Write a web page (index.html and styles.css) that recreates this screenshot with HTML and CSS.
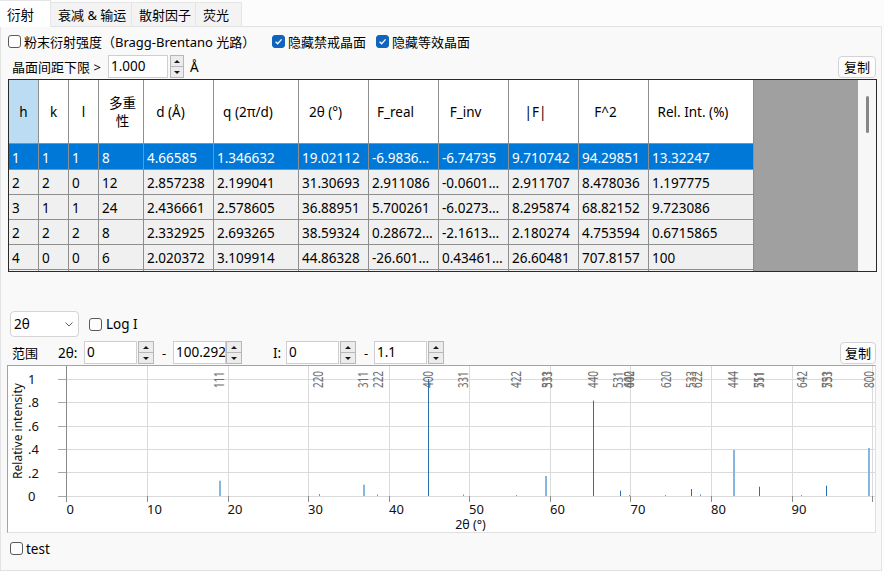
FILE: index.html
```html
<!DOCTYPE html>
<html lang="zh">
<head>
<meta charset="utf-8">
<title>衍射</title>
<link rel="stylesheet" href="styles.css">
</head>
<body>
<div class="tabs">
  <div class="tab tab-1 tab-active">衍射</div>
  <div class="tab tab-2">衰减 &amp; 输运</div>
  <div class="tab tab-3">散射因子</div>
  <div class="tab tab-4">荧光</div>
</div>
<div class="panel">
  <div class="opts">
    <div class="opt opt-1"><span class="cb"></span>粉末衍射强度（Bragg-Brentano 光路）</div>
    <div class="opt opt-2"><span class="cb cb-on"><svg width="11" height="11" viewBox="0 0 11 11"><path d="M2.6 5.8 L4.6 7.8 L8.6 3.4" fill="none" stroke="#fff" stroke-width="1.3"/></svg></span>隐藏禁戒晶面</div>
    <div class="opt opt-3"><span class="cb cb-on"><svg width="11" height="11" viewBox="0 0 11 11"><path d="M2.6 5.8 L4.6 7.8 L8.6 3.4" fill="none" stroke="#fff" stroke-width="1.3"/></svg></span>隐藏等效晶面</div>
  </div>

  <div class="dmin">
    <span class="dmin-label">晶面间距下限 &gt;</span>
    <span class="num num-dmin">1.000</span>
    <span class="spin spin-dmin"><span class="spin-b"><i class="tri-up"></i></span><span class="spin-b"><i class="tri-down"></i></span></span>
    <span class="unit">Å</span>
    <span class="btn">复制</span>
  </div>

  <div class="grid">
    <div class="table">
      <div class="th th-sel th-narrow">h</div>
      <div class="th th-narrow">k</div>
      <div class="th th-narrow">l</div>
      <div class="th th-narrow th-multi">多重<br>性</div>
      <div class="th">d (Å)</div>
      <div class="th">q (2π/d)</div>
      <div class="th">2θ (°)</div>
      <div class="th">F_real</div>
      <div class="th">F_inv</div>
      <div class="th">|F|</div>
      <div class="th">F^2</div>
      <div class="th">Rel. Int. (%)</div>

      <div class="td sel">1</div><div class="td sel">1</div><div class="td sel">1</div><div class="td sel">8</div><div class="td sel">4.66585</div><div class="td sel">1.346632</div><div class="td sel">19.02112</div><div class="td sel">-6.9836…</div><div class="td sel">-6.74735</div><div class="td sel">9.710742</div><div class="td sel">94.29851</div><div class="td sel">13.32247</div>

      <div class="td">2</div><div class="td">2</div><div class="td">0</div><div class="td">12</div><div class="td">2.857238</div><div class="td">2.199041</div><div class="td">31.30693</div><div class="td">2.911086</div><div class="td">-0.0601…</div><div class="td">2.911707</div><div class="td">8.478036</div><div class="td">1.197775</div>

      <div class="td">3</div><div class="td">1</div><div class="td">1</div><div class="td">24</div><div class="td">2.436661</div><div class="td">2.578605</div><div class="td">36.88951</div><div class="td">5.700261</div><div class="td">-6.0273…</div><div class="td">8.295874</div><div class="td">68.82152</div><div class="td">9.723086</div>

      <div class="td">2</div><div class="td">2</div><div class="td">2</div><div class="td">8</div><div class="td">2.332925</div><div class="td">2.693265</div><div class="td">38.59324</div><div class="td">0.28672…</div><div class="td">-2.1613…</div><div class="td">2.180274</div><div class="td">4.753594</div><div class="td">0.6715865</div>

      <div class="td">4</div><div class="td">0</div><div class="td">0</div><div class="td">6</div><div class="td">2.020372</div><div class="td">3.109914</div><div class="td">44.86328</div><div class="td">-26.601…</div><div class="td">0.43461…</div><div class="td">26.60481</div><div class="td">707.8157</div><div class="td">100</div>

      <div class="td"></div><div class="td"></div><div class="td"></div><div class="td"></div><div class="td"></div><div class="td"></div><div class="td"></div><div class="td"></div><div class="td"></div><div class="td"></div><div class="td"></div><div class="td"></div>
    </div>
    <div class="workspace"></div>
    <div class="vscroll"><div class="thumb"></div></div>
  </div>

  <div class="ctrl">
    <div class="combo"><span>2θ</span><svg class="chev" width="8" height="5" viewBox="0 0 8 5"><path d="M0.5 0.5 L4 4 L7.5 0.5" fill="none" stroke="#606060" stroke-width="1"/></svg></div>
    <div class="opt opt-log"><span class="cb"></span>Log I</div>
  </div>

  <div class="range">
    <span class="r-label">范围</span>
    <span class="r-2t">2θ:</span>
    <span class="num num-r">0</span>
    <span class="spin spin-r"><span class="spin-b"><i class="tri-up"></i></span><span class="spin-b"><i class="tri-down"></i></span></span>
    <span class="r-dash">-</span>
    <span class="num num-r">100.292</span>
    <span class="spin spin-r spin-flush"><span class="spin-b"><i class="tri-up"></i></span><span class="spin-b"><i class="tri-down"></i></span></span>
    <span class="r-i">I:</span>
    <span class="num num-r">0</span>
    <span class="spin spin-r"><span class="spin-b"><i class="tri-up"></i></span><span class="spin-b"><i class="tri-down"></i></span></span>
    <span class="r-dash r-dash2">-</span>
    <span class="num num-r">1.1</span>
    <span class="spin spin-r"><span class="spin-b"><i class="tri-up"></i></span><span class="spin-b"><i class="tri-down"></i></span></span>
    <span class="btn btn-r">复制</span>
  </div>

  <div class="chart">
    <svg class="plot" width="867" height="166" viewBox="8 367 867 166">
      <g stroke="#dadada" stroke-width="1">
        <line x1="147.5" y1="367" x2="147.5" y2="497"/>
        <line x1="228.5" y1="367" x2="228.5" y2="497"/>
        <line x1="308.5" y1="367" x2="308.5" y2="497"/>
        <line x1="389.5" y1="367" x2="389.5" y2="497"/>
        <line x1="469.5" y1="367" x2="469.5" y2="497"/>
        <line x1="550.5" y1="367" x2="550.5" y2="497"/>
        <line x1="630.5" y1="367" x2="630.5" y2="497"/>
        <line x1="711.5" y1="367" x2="711.5" y2="497"/>
        <line x1="792.5" y1="367" x2="792.5" y2="497"/>
        <line x1="872.5" y1="367" x2="872.5" y2="497"/>
        <line x1="67" y1="380.5" x2="875" y2="380.5"/>
        <line x1="67" y1="403.5" x2="875" y2="403.5"/>
        <line x1="67" y1="427.5" x2="875" y2="427.5"/>
        <line x1="67" y1="450.5" x2="875" y2="450.5"/>
        <line x1="67" y1="473.5" x2="875" y2="473.5"/>
        <line x1="67" y1="497.5" x2="875" y2="497.5"/>
      </g>
      <g stroke="#a8a8a8" stroke-width="1">
        <line x1="58" y1="380.5" x2="67" y2="380.5"/>
        <line x1="58" y1="403.5" x2="67" y2="403.5"/>
        <line x1="58" y1="427.5" x2="67" y2="427.5"/>
        <line x1="58" y1="450.5" x2="67" y2="450.5"/>
        <line x1="58" y1="473.5" x2="67" y2="473.5"/>
        <line x1="58" y1="497.5" x2="67" y2="497.5"/>
      </g>
      <g stroke="#8a8a8a" stroke-width="1">
        <line x1="66.5" y1="367" x2="66.5" y2="503"/>
        <line x1="147.5" y1="497" x2="147.5" y2="503"/>
        <line x1="228.5" y1="497" x2="228.5" y2="503"/>
        <line x1="308.5" y1="497" x2="308.5" y2="503"/>
        <line x1="389.5" y1="497" x2="389.5" y2="503"/>
        <line x1="469.5" y1="497" x2="469.5" y2="503"/>
        <line x1="550.5" y1="497" x2="550.5" y2="503"/>
        <line x1="630.5" y1="497" x2="630.5" y2="503"/>
        <line x1="711.5" y1="497" x2="711.5" y2="503"/>
        <line x1="792.5" y1="497" x2="792.5" y2="503"/>
        <line x1="872.5" y1="497" x2="872.5" y2="503"/>
      </g>

      <g class="peak-labels" fill="#6e6e6e" font-size="13.5">
        <text transform="translate(223.7,389) rotate(-90)" textLength="16.5" lengthAdjust="spacingAndGlyphs">111</text>
        <text transform="translate(323,389) rotate(-90)" textLength="17" lengthAdjust="spacingAndGlyphs">220</text>
        <text transform="translate(368.3,389) rotate(-90)" textLength="16.5" lengthAdjust="spacingAndGlyphs">311</text>
        <text transform="translate(382.7,389) rotate(-90)" textLength="17" lengthAdjust="spacingAndGlyphs">222</text>
        <text transform="translate(433.3,389) rotate(-90)" textLength="17" lengthAdjust="spacingAndGlyphs">400</text>
        <text transform="translate(468.3,389) rotate(-90)" textLength="16.5" lengthAdjust="spacingAndGlyphs">331</text>
        <text transform="translate(521,389) rotate(-90)" textLength="17" lengthAdjust="spacingAndGlyphs">422</text>
        <text transform="translate(551.7,389) rotate(-90)" textLength="17" lengthAdjust="spacingAndGlyphs">333</text>
        <text transform="translate(551.7,389) rotate(-90)" textLength="17" lengthAdjust="spacingAndGlyphs">511</text>
        <text transform="translate(597.7,389) rotate(-90)" textLength="17" lengthAdjust="spacingAndGlyphs">440</text>
        <text transform="translate(623.3,389) rotate(-90)" textLength="16.5" lengthAdjust="spacingAndGlyphs">531</text>
        <text transform="translate(634.3,389) rotate(-90)" textLength="17" lengthAdjust="spacingAndGlyphs">442</text>
        <text transform="translate(634.3,389) rotate(-90)" textLength="17" lengthAdjust="spacingAndGlyphs">600</text>
        <text transform="translate(671,389) rotate(-90)" textLength="17" lengthAdjust="spacingAndGlyphs">620</text>
        <text transform="translate(695.7,389) rotate(-90)" textLength="17" lengthAdjust="spacingAndGlyphs">533</text>
        <text transform="translate(701.7,389) rotate(-90)" textLength="17" lengthAdjust="spacingAndGlyphs">622</text>
        <text transform="translate(738.3,389) rotate(-90)" textLength="17" lengthAdjust="spacingAndGlyphs">444</text>
        <text transform="translate(764.3,389) rotate(-90)" textLength="16.5" lengthAdjust="spacingAndGlyphs">551</text>
        <text transform="translate(764.3,389) rotate(-90)" textLength="16.5" lengthAdjust="spacingAndGlyphs">711</text>
        <text transform="translate(806.7,389) rotate(-90)" textLength="17" lengthAdjust="spacingAndGlyphs">642</text>
        <text transform="translate(831.7,389) rotate(-90)" textLength="17" lengthAdjust="spacingAndGlyphs">553</text>
        <text transform="translate(831.7,389) rotate(-90)" textLength="17" lengthAdjust="spacingAndGlyphs">731</text>
        <text transform="translate(873.8,389) rotate(-90)" textLength="17" lengthAdjust="spacingAndGlyphs">800</text>
      </g>

      <g stroke="#86b6de" stroke-width="2">
        <line x1="220" y1="481.7" x2="220" y2="497"/>
        <line x1="364" y1="485.7" x2="364" y2="497"/>
        <line x1="546" y1="477" x2="546" y2="497"/>
        <line x1="734" y1="451" x2="734" y2="497"/>
        <line x1="869" y1="449" x2="869" y2="497"/>
      </g>
      <g stroke="#2a70b0" stroke-width="1">
        <line x1="428.5" y1="380" x2="428.5" y2="497"/>
        <line x1="593.5" y1="401.7" x2="593.5" y2="497"/>
        <line x1="620.5" y1="491.7" x2="620.5" y2="497"/>
        <line x1="691.5" y1="490" x2="691.5" y2="497"/>
        <line x1="759.5" y1="487.7" x2="759.5" y2="497"/>
        <line x1="826.5" y1="486.7" x2="826.5" y2="497"/>
      </g>
      <g stroke="#5d9ad0" stroke-width="1">
        <line x1="319.5" y1="495" x2="319.5" y2="497"/>
        <line x1="377.5" y1="495.5" x2="377.5" y2="497"/>
        <line x1="463.5" y1="495.5" x2="463.5" y2="497"/>
        <line x1="516.5" y1="496" x2="516.5" y2="497"/>
        <line x1="629.5" y1="496" x2="629.5" y2="497"/>
        <line x1="665.5" y1="496" x2="665.5" y2="497"/>
        <line x1="700.5" y1="495.3" x2="700.5" y2="497"/>
        <line x1="801.5" y1="496" x2="801.5" y2="497"/>
      </g>

      <g class="ticks" fill="#111" font-size="13">
        <text x="28" y="384.5">1</text>
        <text x="28" y="408">.8</text>
        <text x="28" y="431.5">.6</text>
        <text x="28" y="455">.4</text>
        <text x="28" y="478.5">.2</text>
        <text x="28" y="502">0</text>
        <text x="66.5" y="515">0</text>
        <text x="147" y="515">10</text>
        <text x="227.5" y="515">20</text>
        <text x="308" y="515">30</text>
        <text x="389" y="515">40</text>
        <text x="469" y="515">50</text>
        <text x="550" y="515">60</text>
        <text x="630.5" y="515">70</text>
        <text x="711" y="515">80</text>
        <text x="791.5" y="515">90</text>
        <text x="470.5" y="529.5" text-anchor="middle" font-size="12.5">2θ (°)</text>
        <text transform="translate(22,432) rotate(-90)" text-anchor="middle" font-size="12">Relative intensity</text>
      </g>
    </svg>
  </div>

  <div class="opt opt-test"><span class="cb"></span>test</div>
</div>
</body>
</html>
```

FILE: styles.css
```css
* { box-sizing: border-box; }
html, body { margin: 0; padding: 0; }
body {
  width: 884px;
  height: 572px;
  overflow: hidden;
  background: #fcfcfc;
  font-family: "Noto Sans", "Noto Sans CJK SC", sans-serif;
  font-size: 13px;
  color: #000;
}

/* tabs */
.tabs {
  display: flex;
  align-items: flex-end;
  height: 26px;
}
.tab {
  height: 24px;
  padding: 1px 0 0 7px;
  line-height: 22px;
  background: #f3f3f3;
  border-top: 1px solid #e5e5e5;
  border-right: 1px solid #e5e5e5;
  white-space: nowrap;
}
.tab-active {
  height: 27px;
  margin-bottom: -1px;
  background: #ffffff;
  line-height: 26px;
  font-size: 13.5px;
  position: relative;
  z-index: 1;
}
.tab-1 { width: 51px; }
.tab-2 { width: 81px; }
.tab-3 { width: 64px; }
.tab-4 { width: 46px; }

/* panel */
.panel {
  width: 882px;
  height: 545px;
  background: #f9f9f9;
  border: 1px solid #e3e3e3;
}

/* checkboxes */
.opt {
  display: flex;
  align-items: center;
  white-space: nowrap;
}
.cb {
  flex: none;
  width: 13px;
  height: 13px;
  margin-right: 3px;
  border: 1px solid #5a5a5a;
  border-radius: 3px;
  background: #fdfdfd;
  display: flex;
  align-items: center;
  justify-content: center;
}
.cb-on {
  background: #0f65bd;
  border-color: #0f65bd;
}

.opts {
  display: flex;
  align-items: center;
  height: 20px;
  margin-top: 4px;
}
.opt-1 { margin-left: 7px; width: 264px; }
.opt-2 { width: 104px; }

/* d-min row */
.dmin {
  display: flex;
  align-items: center;
  height: 23px;
  margin-top: 4px;
}
.dmin-label {
  margin-left: 11px;
  width: 96px;
  white-space: nowrap;
}
.num {
  height: 23px;
  background: #fff;
  border: 1px solid #cfcfcf;
  font-size: 13.5px;
  line-height: 21px;
  padding-left: 2px;
  white-space: nowrap;
  overflow: hidden;
}
.num-dmin { width: 60px; }
.spin {
  display: flex;
  flex-direction: column;
  height: 23px;
}
.spin-dmin { width: 14px; margin-left: 2px; }
.spin-b {
  flex: 1;
  display: flex;
  align-items: center;
  justify-content: center;
  background: #ececec;
  border: 1px solid #b7b7b7;
}
.spin-b + .spin-b { border-top: none; }
.tri-up {
  width: 0;
  height: 0;
  border-left: 3px solid transparent;
  border-right: 3px solid transparent;
  border-bottom: 3px solid #1a1a1a;
}
.tri-down {
  width: 0;
  height: 0;
  border-left: 3px solid transparent;
  border-right: 3px solid transparent;
  border-top: 3px solid #1a1a1a;
}
.unit { margin-left: 6px; font-size: 13.5px; }
.btn {
  margin-left: auto;
  margin-right: 5px;
  width: 38px;
  height: 22px;
  display: flex;
  align-items: center;
  justify-content: center;
  background: #fdfdfd;
  border: 1px solid #d3d3d3;
  border-radius: 4px;
  white-space: nowrap;
}

/* data grid */
.grid {
  display: flex;
  margin-top: 1px;
  margin-left: 7px;
  width: 869px;
  height: 193px;
  border: 1px solid #2a2a2a;
  overflow: hidden;
}
.table {
  flex: none;
  display: grid;
  grid-template-columns: 30px 30px 30px 45px 70px 85px 70px 70px 70px 70px 70px 105px;
  grid-template-rows: 64px 26px 25px 25px 25px 25px 25px;
  width: 745px;
  font-size: 13.5px;
}
.th, .td {
  border-right: 1px solid #8e8e8e;
  border-bottom: 1px solid #8e8e8e;
  display: flex;
  align-items: center;
  white-space: nowrap;
  overflow: hidden;
}
.th {
  background: #fff;
  justify-content: center;
  padding-right: 16px;
}
.th-narrow { padding-right: 0; }
.th-sel { background: #bcdcf4; }
.th-multi {
  text-align: center;
  line-height: 18px;
  padding-left: 3px;
}
.td {
  background: #f0f0f0;
  padding-left: 3px;
  padding-top: 2px;
}
.td.sel {
  background: #0078d7;
  color: #fff;
}
.workspace {
  flex: 1;
  background: #a0a0a0;
}
.vscroll {
  flex: none;
  width: 18px;
  background: #f7f7f7;
}
.thumb {
  width: 3px;
  height: 37px;
  margin-top: 16px;
  margin-left: 8px;
  border-radius: 2px;
  background: #878787;
}

/* plot controls */
.ctrl {
  display: flex;
  align-items: center;
  height: 26px;
  margin-top: 39px;
}
.combo {
  margin-left: 9px;
  width: 69px;
  height: 26px;
  display: flex;
  align-items: center;
  justify-content: space-between;
  padding: 0 5px 0 3px;
  background: #fff;
  border: 1px solid #d4d4d4;
  border-radius: 4px;
  font-size: 13.5px;
}
.opt-log { margin-left: 10px; font-size: 13.5px; }
.opt-log .cb { margin-right: 4px; }

.range {
  display: flex;
  align-items: center;
  height: 23px;
  margin-top: 4px;
}
.r-label { margin-left: 11px; width: 46px; }
.r-2t { width: 26px; font-size: 13.5px; }
.num-r { width: 53px; }
.spin-r { width: 16px; margin-left: 1px; }
.spin-flush { margin-left: 0; }
.r-dash { width: 19px; padding-left: 8px; }
.r-dash2 { width: 18px; }
.r-i { width: 44px; padding-left: 31px; font-size: 13.5px; }
.btn-r { width: 36px; }

/* chart */
.chart {
  margin-top: 1px;
  margin-left: 6px;
  width: 869px;
  height: 168px;
  background: #fff;
  border: 1px solid;
  border-color: #a3a3a3 #e0e0e0 #e0e0e0 #a3a3a3;
}
.plot {
  display: block;
  overflow: visible;
  font-family: "Noto Sans", sans-serif;
}

.opt-test {
  margin-top: 9px;
  margin-left: 9px;
  height: 13px;
  font-size: 13.5px;
}
```
